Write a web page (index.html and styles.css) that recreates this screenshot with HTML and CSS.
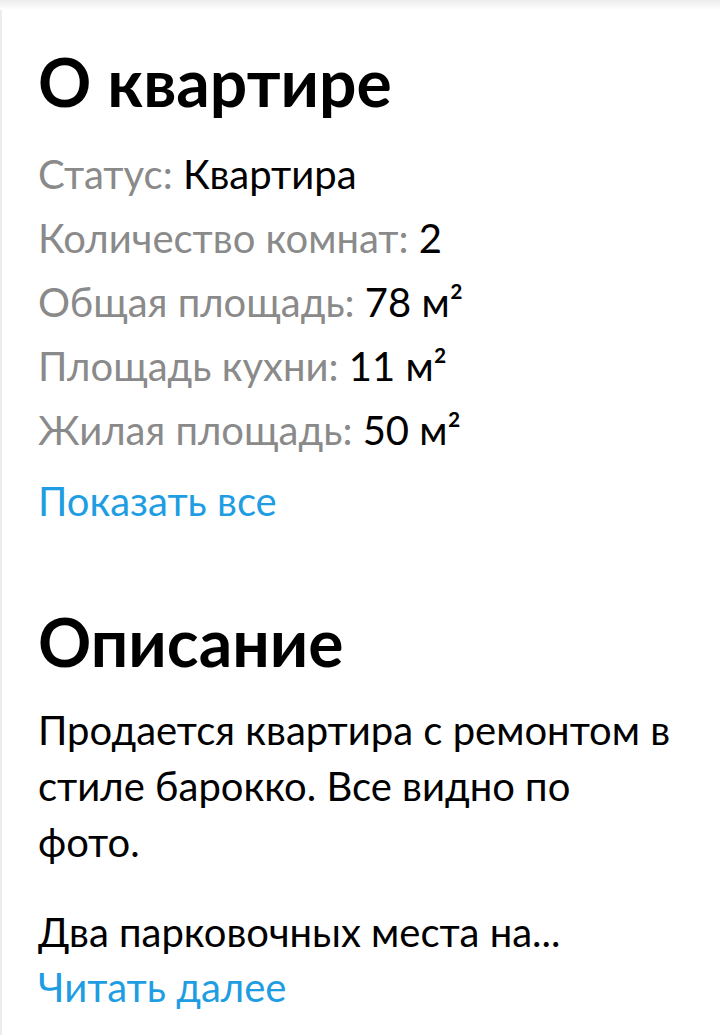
FILE: index.html
```html
<!DOCTYPE html>
<html>
  <head>
    <meta charset="utf-8">
    <title>О квартире</title>
    <link rel="stylesheet" href="styles.css">
  </head>
  <body>
    <div class="top-shadow"></div>
    <div class="page">
      <section class="block about">
        <h2 class="block-title">О квартире</h2>
        <ul class="params">
          <li><span class="label">Статус:</span> Квартира</li>
          <li><span class="label">Количество комнат:</span> 2</li>
          <li><span class="label">Общая площадь:</span> 78 м²</li>
          <li><span class="label">Площадь кухни:</span> 11 м²</li>
          <li><span class="label">Жилая площадь:</span> 50 м²</li>
        </ul>
        <a class="more" href="#">Показать все</a>
      </section>
      <section class="block description">
        <h2 class="block-title">Описание</h2>
        <p class="text">Продается квартира с ремонтом в стиле барокко. Все видно по фото.</p>
        <p class="text cut">Два парковочных места на...</p>
        <a class="more" href="#">Читать далее</a>
      </section>
    </div>
  </body>
</html>
```

FILE: styles.css
```css
body, html {
  margin: 0px;
  padding: 0px;
  background: #fff;
  font-family: Lato, "Noto Sans", sans-serif;
  color: #000;
}
.top-shadow {
  height: 10px;
  background: linear-gradient(#ececec, #fff);
}
.page {
  border-left: 2px solid #ececec;
  padding: 0 36px;
  min-height: 1025px;
}
.block {
  display: flex;
  flex-direction: column;
  align-items: flex-start;
}
.block-title {
  margin: 0;
  font-size: 66px;
  font-weight: 700;
  line-height: 66px;
}
.about {
  padding-top: 39px;
}
.params {
  list-style: none;
  margin: 27px 0 0 0;
  padding: 0;
  font-size: 40px;
  line-height: 64px;
}
.params .label {
  color: #8a8a8a;
}
.more {
  color: #1e9de2;
  text-decoration: none;
  font-size: 40px;
  line-height: 48px;
}
.about .more {
  margin-top: 15px;
}
.description {
  padding-top: 84px;
}
.description .more {
  margin-top: 3px;
}
.text {
  margin: 27px 0 0 0;
  max-width: 636px;
  font-size: 40px;
  line-height: 56px;
}
.text.cut {
  margin-top: 34px;
}
```
